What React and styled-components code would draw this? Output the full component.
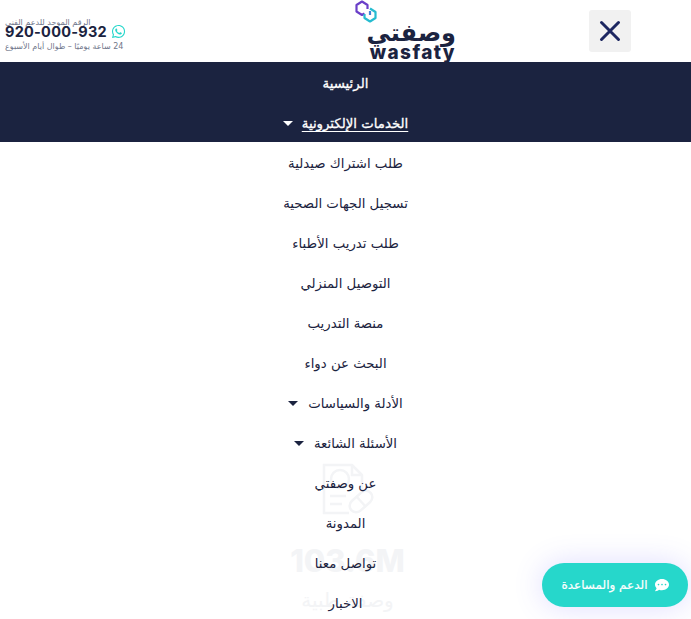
import React from 'react';
import styled, {createGlobalStyle} from 'styled-components';
import {FaWhatsapp, FaCommentDots} from 'react-icons/fa';

const NAVY = '#1b2340';
const TEAL = '#26d7cb';

const GlobalStyle = createGlobalStyle`
  html, body {
    margin: 0;
    padding: 0;
    background: #fff;
    overflow: hidden;
  }
  body {
    font-family: "DejaVu Sans", "Noto Sans", sans-serif;
  }
`;

const Page = styled.div`
  position: relative;
  width: 691px;
  height: 619px;
  overflow: hidden;
`;

const Header = styled.header`
  display: flex;
  align-items: center;
  direction: rtl;
  gap: 132px;
  height: 62px;
  padding: 0 60px 0 5px;
  box-sizing: border-box;
`;

const CloseButton = styled.button`
  display: flex;
  align-items: center;
  justify-content: center;
  flex: none;
  width: 42px;
  height: 42px;
  padding: 0;
  border: 0;
  border-radius: 3px;
  background: #f1f1f1;
  color: #1c2660;
`;

const Logo = styled.div`
  position: relative;
  flex: none;
  width: 102px;
  height: 62px;
  color: ${NAVY};
`;

const LogoMark = styled.svg`
  position: absolute;
  top: 0;
  left: 0;
  width: 22px;
  height: 23px;
`;

const LogoArabic = styled.div`
  padding: 20px 1px 0 0;
  font-size: 24px;
  line-height: 26px;
  font-weight: 700;
`;

const LogoLatin = styled.div`
  margin-top: -3px;
  padding-right: 1px;
  direction: ltr;
  text-align: right;
  font-family: "Inter", "Liberation Sans", sans-serif;
  font-size: 19px;
  line-height: 19px;
  font-weight: 800;
  letter-spacing: 1.4px;
`;

const Support = styled.div`
  display: flex;
  flex-direction: column;
  flex: none;
  margin-top: 8px;
  margin-right: auto;
  width: 122px;
  color: #70768a;
`;

const SupportLabel = styled.div`
  margin-bottom: -3px;
  font-size: 8px;
  line-height: 9px;
  text-align: left;
`;

const PhoneRow = styled.div`
  display: flex;
  align-items: center;
  gap: 4px;
  direction: ltr;
`;

const Phone = styled.span`
  font-family: "Inter", "Liberation Sans", sans-serif;
  font-size: 14.5px;
  line-height: 13px;
  font-weight: 700;
  letter-spacing: 0.25px;
  white-space: nowrap;
  color: ${NAVY};
`;

const SupportHours = styled.div`
  margin-top: 3px;
  font-size: 8px;
  line-height: 10px;
  text-align: left;
  white-space: nowrap;
`;

const Stat = styled.section`
  display: flex;
  flex-direction: column;
  align-items: center;
  color: #f3f4f6;
  padding: 401px 0 0 4px;
`;

const StatIcon = styled.svg`
  width: 52px;
  height: 52px;
`;

const StatValue = styled.div`
  margin-top: 26px;
  font-family: "Inter", "Liberation Sans", sans-serif;
  font-size: 31px;
  line-height: 40px;
  font-weight: 800;
`;

const StatLabel = styled.div`
  margin-top: 6px;
  font-size: 20px;
  line-height: 26px;
`;

const Menu = styled.nav`
  position: absolute;
  top: 62px;
  left: 0;
  right: 0;
  direction: rtl;
`;

const MenuItem = styled.a`
  display: flex;
  align-items: center;
  justify-content: center;
  gap: ${p => (p.$dark ? 9 : 10)}px;
  height: 40px;
  padding-top: 3px;
  box-sizing: border-box;
  font-size: 13.3px;
  background: ${p => (p.$dark ? NAVY : 'transparent')};
  color: ${p => (p.$dark ? '#fff' : NAVY)};
  -webkit-text-stroke: ${p => (p.$dark ? '0.3px #fff' : '0')};
`;

const ItemLabel = styled.span`
  text-decoration: ${p => (p.$active ? 'underline' : 'none')};
  text-decoration-thickness: 1px;
  text-underline-offset: 3px;
`;

const Caret = styled.span`
  width: 0;
  height: 0;
  border-left: 5.5px solid transparent;
  border-right: 5.5px solid transparent;
  border-top: 5.5px solid currentColor;
`;

const SupportButton = styled.button`
  position: absolute;
  left: 542px;
  top: 563px;
  display: flex;
  align-items: center;
  justify-content: center;
  gap: 7px;
  direction: rtl;
  width: 146px;
  height: 44px;
  padding: 0;
  border: 0;
  border-radius: 22px;
  background: ${TEAL};
  color: #fff;
  font-family: inherit;
  font-size: 12px;
  -webkit-text-stroke: 0.2px #fff;
  box-shadow: 0 0 30px rgba(90, 80, 255, 0.2);
`;

const items = [
  {label: 'الرئيسية', dark: true},
  {label: 'الخدمات الإلكترونية', dark: true, active: true, caret: true},
  {label: 'طلب اشتراك صيدلية'},
  {label: 'تسجيل الجهات الصحية'},
  {label: 'طلب تدريب الأطباء'},
  {label: 'التوصيل المنزلي'},
  {label: 'منصة التدريب'},
  {label: 'البحث عن دواء'},
  {label: 'الأدلة والسياسات', caret: true},
  {label: 'الأسئلة الشائعة', caret: true},
  {label: 'عن وصفتي'},
  {label: 'المدونة'},
  {label: 'تواصل معنا'},
  {label: 'الاخبار'}
];

export default function App() {
  return (
    <Page>
      <GlobalStyle />
      <Header>
        <CloseButton aria-label="إغلاق">
          <svg width="24" height="24" viewBox="0 0 24 24" fill="none" stroke="currentColor" strokeWidth="3" strokeLinecap="round">
            <path d="M3.5 3.5 L20.5 20.5 M20.5 3.5 L3.5 20.5" />
          </svg>
        </CloseButton>
        <Logo>
          <LogoMark viewBox="0 0 22 23" fill="none" strokeWidth="2.2" strokeLinejoin="round">
            <path d="M9.5 13.5 L7 15 L1.5 11.5 V5 L7 1.5 L12.5 5 V9" stroke="#6a3fc8" />
            <path d="M15 11 V15" stroke="#3f86d6" />
            <path d="M15 8.5 L20.5 12 V18 L15 21.5 L9.5 18 V14" stroke="#26bcd0" />
          </LogoMark>
          <LogoArabic>وصفتي</LogoArabic>
          <LogoLatin>wasfaty</LogoLatin>
        </Logo>
        <Support>
          <SupportLabel>الرقم الموحد للدعم الفني</SupportLabel>
          <PhoneRow>
            <Phone>920-000-932</Phone>
            <FaWhatsapp size={15} color={TEAL} />
          </PhoneRow>
          <SupportHours>24 ساعة يوميًا – طوال أيام الأسبوع</SupportHours>
        </Support>
      </Header>
      <Stat>
        <StatIcon viewBox="0 0 52 52" fill="none" stroke="currentColor" strokeWidth="2.5">
          <path d="M27 50 H2 V2 H30 L40 12 V26" />
          <path d="M30 2 V12 H40" />
          <circle cx="18" cy="16" r="9" />
          <path d="M8 33 H24 M8 41 H20" />
          <rect x="26" y="32" width="26" height="13" rx="6.5" transform="rotate(-42 39 38.5)" />
          <path d="M34 33 L44 44" />
        </StatIcon>
        <StatValue>103.6M</StatValue>
        <StatLabel>وصفة طبية</StatLabel>
      </Stat>
      <Menu>
        {items.map(item => (
          <MenuItem key={item.label} $dark={item.dark}>
            <ItemLabel $active={item.active}>{item.label}</ItemLabel>
            {item.caret && <Caret />}
          </MenuItem>
        ))}
      </Menu>
      <SupportButton>
        <FaCommentDots size={14} />
        الدعم والمساعدة
      </SupportButton>
    </Page>
  );
}
